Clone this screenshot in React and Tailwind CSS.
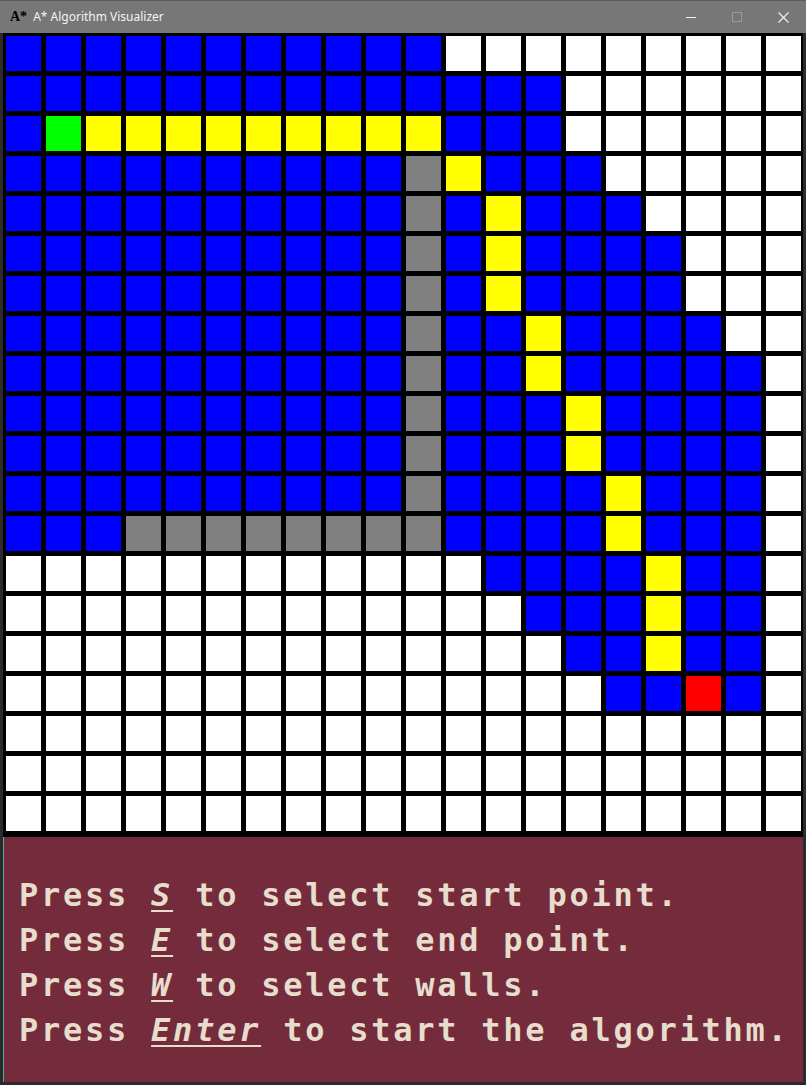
import React from "react";

const B = "bg-[#0000ff]";
const W = "bg-white";
const Y = "bg-[#ffff00]";
const G = "bg-[#808080]";
const S = "bg-[#00ff00]";
const R = "bg-[#ff0000]";

const rows = [
  "BBBBBBBBBBBWWWWWWWWW",
  "BBBBBBBBBBBBBBWWWWWW",
  "BSYYYYYYYYYBBBWWWWWW",
  "BBBBBBBBBBGYBBBWWWWW",
  "BBBBBBBBBBGBYBBBWWWW",
  "BBBBBBBBBBGBYBBBBWWW",
  "BBBBBBBBBBGBYBBBBWWW",
  "BBBBBBBBBBGBBYBBBBWW",
  "BBBBBBBBBBGBBYBBBBBW",
  "BBBBBBBBBBGBBBYBBBBW",
  "BBBBBBBBBBGBBBYBBBBW",
  "BBBBBBBBBBGBBBBYBBBW",
  "BBBGGGGGGGGBBBBYBBBW",
  "WWWWWWWWWWWWBBBBYBBW",
  "WWWWWWWWWWWWWBBBYBBW",
  "WWWWWWWWWWWWWWBBYBBW",
  "WWWWWWWWWWWWWWWBBRBW",
  "WWWWWWWWWWWWWWWWWWWW",
  "WWWWWWWWWWWWWWWWWWWW",
  "WWWWWWWWWWWWWWWWWWWW",
];

const colorOf = { B, W, Y, G, S, R };

const mono = { fontFamily: '"DejaVu Sans Mono", monospace' };

function Line({ keyName, rest }) {
  return (
    <div className="h-[45px] leading-[45px] whitespace-pre">
      {"Press "}
      <span className="italic underline decoration-2 underline-offset-[4px]">{keyName}</span>
      {" " + rest}
    </div>
  );
}

export default function App() {
  return (
    <div className="w-[806px] h-[1085px] bg-[#2b2b2b] flex flex-col overflow-hidden">
      {/* Title bar */}
      <div className="h-[33px] bg-[#777777] border-t border-[#5a5a5a] flex items-center relative">
        <span
          className="ml-[10px] text-[14px] font-bold text-black leading-none"
          style={{ fontFamily: '"Liberation Serif", serif' }}
        >
          A*
        </span>
        <span
          className="ml-[6px] text-[12px] text-[#f4f4f4] leading-none"
          style={{ fontFamily: '"Noto Sans", "Liberation Sans", sans-serif' }}
        >
          A* Algorithm Visualizer
        </span>
        <div className="ml-auto flex items-center h-full">
          <div className="w-[46px] h-full flex items-center justify-center">
            <div className="w-[10px] h-px bg-[#f0f0f0]" />
          </div>
          <div className="w-[46px] h-full flex items-center justify-center">
            <div className="w-[10px] h-[10px] border border-[#9a9a9a]" />
          </div>
          <div className="w-[46px] h-full flex items-center justify-center">
            <svg width="11" height="11" viewBox="0 0 11 11">
              <path d="M0.5 0.5 L10.5 10.5 M10.5 0.5 L0.5 10.5" stroke="#f4f4f4" strokeWidth="1.1" />
            </svg>
          </div>
        </div>
      </div>

      {/* Client area */}
      <div className="mx-[3px] w-[800px] flex flex-col">
        <div className="h-[804px] bg-black pl-[3px] pt-[3px]">
          <div className="grid grid-cols-[repeat(20,35px)] grid-rows-[repeat(20,35px)] gap-[5px]">
            {rows.map((r, ri) =>
              r.split("").map((c, ci) => (
                <div key={ri + "-" + ci} className={colorOf[c]} />
              ))
            )}
          </div>
        </div>
        <div
          className="h-[245px] bg-[#742b3b] border-l border-[#5fa59a] pl-[15px] pt-[36px] text-[32px] font-bold text-[#e6ddcc] tracking-[2.75px]"
          style={mono}
        >
          <Line keyName="S" rest="to select start point." />
          <Line keyName="E" rest="to select end point." />
          <Line keyName="W" rest="to select walls." />
          <Line keyName="Enter" rest="to start the algorithm." />
        </div>
      </div>
    </div>
  );
}
